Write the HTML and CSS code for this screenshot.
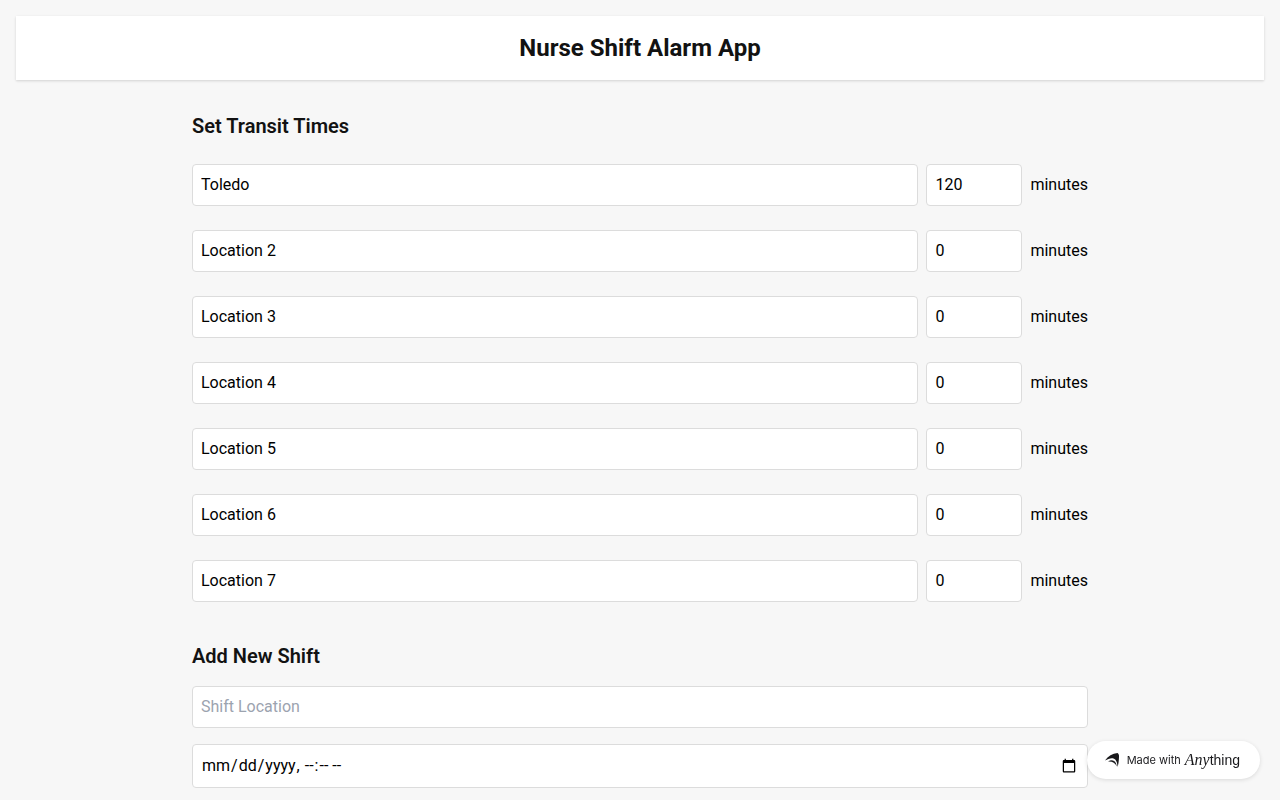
FILE: index.html
```
<!DOCTYPE html>
<html lang="en">
<head>
    <meta charset="UTF-8">
    <meta name="viewport" content="width=device-width, initial-scale=1.0">
    <title>Nurse Shift Alarm App</title>
    <link rel="stylesheet" href="styles.css">
</head>
<body>

<header class="header">
    <h1>Nurse Shift Alarm App</h1>
</header>

<main class="container">
    <section class="section">
        <h2>Set Transit Times</h2>
        <div class="transit-list">
            <div class="transit-row">
                <input type="text" class="field location" aria-label="Location 1 name" value="Toledo">
                <input type="number" class="field time" id="time1" value="120">
                <label for="time1">minutes</label>
            </div>
            <div class="transit-row">
                <input type="text" class="field location" aria-label="Location 2 name" value="Location 2">
                <input type="number" class="field time" id="time2" value="0">
                <label for="time2">minutes</label>
            </div>
            <div class="transit-row">
                <input type="text" class="field location" aria-label="Location 3 name" value="Location 3">
                <input type="number" class="field time" id="time3" value="0">
                <label for="time3">minutes</label>
            </div>
            <div class="transit-row">
                <input type="text" class="field location" aria-label="Location 4 name" value="Location 4">
                <input type="number" class="field time" id="time4" value="0">
                <label for="time4">minutes</label>
            </div>
            <div class="transit-row">
                <input type="text" class="field location" aria-label="Location 5 name" value="Location 5">
                <input type="number" class="field time" id="time5" value="0">
                <label for="time5">minutes</label>
            </div>
            <div class="transit-row">
                <input type="text" class="field location" aria-label="Location 6 name" value="Location 6">
                <input type="number" class="field time" id="time6" value="0">
                <label for="time6">minutes</label>
            </div>
            <div class="transit-row">
                <input type="text" class="field location" aria-label="Location 7 name" value="Location 7">
                <input type="number" class="field time" id="time7" value="0">
                <label for="time7">minutes</label>
            </div>
        </div>
    </section>

    <section class="section">
        <h2>Add New Shift</h2>
        <form class="shift-form">
            <input type="text" class="field" aria-label="Shift Location" placeholder="Shift Location">
            <input type="datetime-local" class="field" aria-label="Shift date and time">
        </form>
    </section>
</main>

<a class="badge" href="#">
    <svg class="badge-logo" viewBox="0 0 16 16" aria-hidden="true">
        <path d="M1 8.500C4 4 8.500 1.500 13.500 1C14.800 2 15.200 3 15 5C14.900 9 14.400 12 13.600 15C13.400 10.500 12.200 7.200 9.500 6.400C7 5.700 4 6.800 1 8.500Z"/>
        <path d="M4 9.500C8.500 6.800 12 8.500 12.800 14.500C11 10.800 8.500 9.200 4 9.500Z"/>
    </svg>
    <span class="badge-text">Made with</span>
    <span class="badge-brand"><em>Any</em>thing</span>
</a>

</body>
</html>
```
FILE: styles.css
```
* {
    box-sizing: border-box;
}

body {
    font-family: Roboto, sans-serif;
    font-size: 16px;
    line-height: 24px;
    background-color: #f7f7f7;
    margin: 0;
    padding: 16px 16px 0;
    color: #121212;
}

h1, h2 {
    margin: 0;
}

.header {
    background-color: white;
    padding: 16px;
    text-align: center;
    box-shadow: 0 1px 3px rgba(0, 0, 0, 0.1), 0 1px 2px rgba(0, 0, 0, 0.06);
}

h1 {
    font-size: 24px;
    line-height: 32px;
    font-weight: 700;
}

.container {
    max-width: 896px;
    margin: 32px auto 0;
}

.section {
    margin-bottom: 32px;
}

.section:last-child {
    margin-bottom: 0;
}

h2 {
    font-size: 20px;
    line-height: 28px;
    font-weight: 600;
    margin-bottom: 16px;
}

.transit-list {
    display: flex;
    flex-direction: column;
    gap: 8px;
}

.transit-row {
    display: flex;
    align-items: center;
    gap: 8px;
    padding: 8px 0;
}

.transit-row label {
    color: black;
}

.field {
    font: inherit;
    color: black;
    background-color: white;
    border: 1px solid #dcdcdc;
    border-radius: 4px;
    padding: 8px;
    width: 100%;
    min-height: 42px;
}

.field::placeholder {
    color: #9ca3af;
}

.location {
    flex: 1;
    min-width: 0;
}

.time {
    width: 96px;
}

.shift-form {
    display: flex;
    flex-direction: column;
    gap: 16px;
}

.badge {
    position: fixed;
    right: 20px;
    bottom: 21px;
    display: flex;
    align-items: center;
    padding: 7px 20px 7px 17px;
    background-color: white;
    border-radius: 20px;
    box-shadow: 0 1px 4px rgba(0, 0, 0, 0.12);
    color: #18181b;
    text-decoration: none;
}

.badge-logo {
    width: 16px;
    height: 16px;
    margin-right: 7px;
    fill: #18181b;
}

.badge-text {
    font-family: Inter, sans-serif;
    font-size: 11px;
    margin-right: 4px;
}

.badge-brand {
    font-family: "Liberation Sans", sans-serif;
    font-size: 14px;
}

.badge-brand em {
    font-family: "Liberation Serif", serif;
    font-size: 16px;
}
```
